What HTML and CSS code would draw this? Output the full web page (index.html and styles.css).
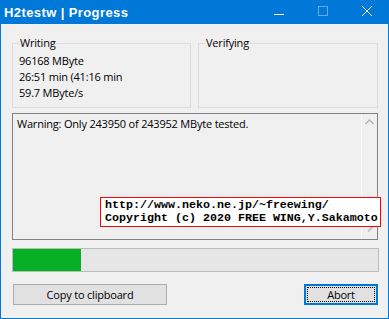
FILE: index.html
```html
<!DOCTYPE html>
<html>
<head>
<meta charset="utf-8">
<link rel="stylesheet" href="styles.css">
</head>
<body>
<div class="window">
  <div class="titlebar">
    <span class="title">H2testw | Progress</span>
    <div class="controls">
      <span class="ctl"><svg width="10" height="10" viewBox="0 0 10 10"><path d="M0 4.5H10" stroke="#fff" stroke-width="1"/></svg></span>
      <span class="ctl"><svg width="10" height="10" viewBox="0 0 10 10"><rect x="0.5" y="0.5" width="9" height="9" fill="none" stroke="#66a9e6" stroke-width="1"/></svg></span>
      <span class="ctl"><svg width="10" height="10" viewBox="0 0 10 10"><path d="M0 0L10 10M10 0L0 10" stroke="#fff" stroke-width="1"/></svg></span>
    </div>
  </div>
  <div class="client">
    <div class="groups">
      <div class="group group-writing">
        <span class="group-label">Writing</span>
        <div class="line">96168 MByte</div>
        <div class="line">26:51 min (41:16 min</div>
        <div class="line">59.7 MByte/s</div>
      </div>
      <div class="group group-verify">
        <span class="group-label">Verifying</span>
      </div>
    </div>
    <div class="log">
      <div class="log-body">
        <div class="log-text">Warning: Only 243950 of 243952 MByte tested.</div>
        <div class="hscroll"></div>
      </div>
      <div class="vscroll">
        <svg class="arrow-up" width="9" height="6" viewBox="0 0 9 6"><path d="M0.5 5L4.5 1L8.5 5" fill="none" stroke="#b4b4b4" stroke-width="1.5"/></svg>
        <svg class="arrow-right" width="6" height="9" viewBox="0 0 6 9"><path d="M1 0.5L5 4.5L1 8.5" fill="none" stroke="#b4b4b4" stroke-width="1.5"/></svg>
      </div>
    </div>
    <div class="progress"><div class="progress-fill" style="width:68px"></div></div>
    <div class="buttons">
      <div class="btn btn-copy">Copy to clipboard</div>
      <div class="btn btn-abort"><span class="focus">Abort</span></div>
    </div>
  </div>
  <div class="watermark">
    <div>http://www.neko.ne.jp/~freewing/</div>
    <div>Copyright (c) 2020 FREE WING,Y.Sakamoto</div>
  </div>
</div>
</body>
</html>
```
FILE: styles.css
```css
html, body {
  margin: 0;
  padding: 0;
  background: #f0f0f0;
}
.window {
  position: relative;
  width: 389px;
  height: 319px;
  box-sizing: border-box;
  background: #0078d7;
  padding: 0 1px 1px 1px;
  display: flex;
  flex-direction: column;
  font-family: "Open Sans", "Noto Sans", sans-serif;
  font-size: 11px;
  letter-spacing: -0.2px;
  color: #000;
}
.titlebar {
  height: 24px;
  display: flex;
  align-items: center;
  color: #fff;
}
.title {
  font-family: "Liberation Sans", sans-serif;
  font-weight: bold;
  font-size: 13px;
  letter-spacing: 0.4px;
  margin-left: 3px;
  margin-top: 1px;
}
.controls {
  margin-left: auto;
  display: flex;
  margin-right: 16px;
  gap: 34px;
}
.ctl {
  display: flex;
  width: 10px;
  height: 10px;
  margin-top: 1px;
}
.ctl:first-child {
  margin-top: 5px;
  height: 10px;
}
.client {
  flex: 1;
  background: #f0f0f0;
  padding: 19px 0 0 11px;
  display: flex;
  flex-direction: column;
}
.groups {
  display: flex;
  gap: 7px;
  height: 65px;
}
.group {
  position: relative;
  box-sizing: border-box;
  border: 1px solid #dcdcdc;
  height: 65px;
  padding: 9px 0 0 6px;
}
.group-writing { width: 179px; }
.group-verify { width: 180px; }
.group-label {
  position: absolute;
  top: -9px;
  left: 6px;
  background: #f0f0f0;
  padding: 0 1px;
  line-height: 16px;
}
.line {
  line-height: 16px;
  height: 16px;
}
.log {
  margin-top: 5px;
  width: 366px;
  height: 127px;
  box-sizing: border-box;
  border: 1px solid #828282;
  display: flex;
}
.log-body {
  flex: 1;
  display: flex;
  flex-direction: column;
}
.log-text {
  flex: 1;
  padding: 2px 0 0 4px;
  line-height: 16px;
}
.hscroll {
  height: 17px;
}
.vscroll {
  width: 15px;
  border-left: 1px solid #fafafa;
  display: flex;
  flex-direction: column;
  align-items: center;
  justify-content: space-between;
  padding: 5px 0 7px;
}
.progress {
  margin-top: 8px;
  width: 367px;
  height: 24px;
  box-sizing: border-box;
  border: 1px solid #bcbcbc;
  background: #e6e6e6;
}
.progress-fill {
  height: 100%;
  background: #06b025;
}
.buttons {
  margin-top: 12px;
  display: flex;
  justify-content: space-between;
  width: 366px;
  padding-left: 1px;
  box-sizing: border-box;
}
.btn {
  height: 21px;
  box-sizing: border-box;
  background: #e1e1e1;
  border: 1px solid #adadad;
  display: flex;
  align-items: center;
  justify-content: center;
  line-height: 16px;
}
.btn-copy { width: 154px; }
.btn-abort {
  width: 74px;
  border: 2px solid #0078d7;
  padding: 1px;
}
.focus {
  flex: 1;
  align-self: stretch;
  border: 1px dotted #000;
  display: flex;
  align-items: center;
  justify-content: center;
}
.watermark {
  position: absolute;
  left: 100px;
  top: 197px;
  width: 281px;
  height: 30px;
  box-sizing: border-box;
  border: 1px solid #ff0000;
  background: #fff;
  padding: 1px 0 0 4px;
  font-family: "Liberation Mono", monospace;
  font-weight: bold;
  font-size: 11.67px;
  line-height: 13px;
  letter-spacing: 0;
  color: #000;
  white-space: nowrap;
}
```
